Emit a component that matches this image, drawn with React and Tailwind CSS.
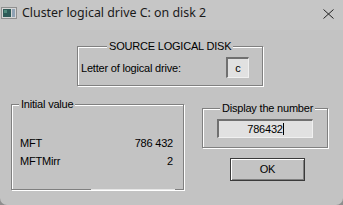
import React from 'react';

const etched = 'border border-[#808080] shadow-[inset_1px_1px_0_#fff,1px_1px_0_#fff]';
const sunken = 'border-t-2 border-l-2 border-t-[#707070] border-l-[#707070] border-b border-r border-b-[#f0f0f0] border-r-[#f0f0f0] bg-[#e1e1e1]';

const GroupBox = ({ title, titleLeft, className = '', children }) => (
  <div className={`relative ${etched} ${className}`}>
    <span
      className="absolute top-[-7px] bg-[#c3c3c3] px-[2px] leading-[12px] whitespace-nowrap"
      style={{ left: titleLeft }}
    >
      {title}
    </span>
    {children}
  </div>
);

const WindowIcon = () => (
  <svg width="16" height="12" viewBox="0 0 16 12">
    <rect x="0.5" y="0.5" width="15" height="11" fill="#d6d6d6" stroke="#8f8f8f" />
    <rect x="2" y="2" width="8" height="8" fill="#2e5b58" />
    <rect x="3" y="3" width="3" height="3" fill="#4f8a7c" />
    <rect x="11" y="2" width="3" height="8" fill="#8fa2b4" />
  </svg>
);

export default function App() {
  return (
    <div className="w-[343px] h-[205px] bg-[#8e8e8e] overflow-hidden">
      <div
        className="w-[343px] h-[205px] bg-[#c3c3c3] rounded-b-[7px] text-black text-[11px] tracking-[-0.2px]"
        style={{ fontFamily: '"Liberation Sans", Arial, sans-serif' }}
      >
        {/* Title bar */}
        <div className="h-[30px] bg-[#c6c6c6] flex items-center">
          <div className="ml-[1px] mt-[-4px]">
            <WindowIcon />
          </div>
          <span
            className="ml-[5px] mt-[-3px] text-[12.4px] tracking-normal text-[#1a1a1a]"
            style={{ fontFamily: '"Noto Sans", "Open Sans", sans-serif' }}
          >
            Cluster logical drive C: on disk 2
          </span>
          <svg className="ml-auto mr-[9px] mt-[-3px]" width="11" height="10" viewBox="0 0 11 10">
            <path d="M0.5 0.5 L10.5 9.5 M10.5 0.5 L0.5 9.5" stroke="#222" strokeWidth="1" fill="none" />
          </svg>
        </div>

        {/* Source logical disk */}
        <GroupBox
          title="SOURCE LOGICAL DISK"
          titleLeft={29}
          className="ml-[77px] mt-[16px] w-[186px] h-[40px] flex items-center justify-between pl-[3px] pr-[13px]"
        >
          <span className="mt-[4px]">Letter of logical drive:</span>
          <div className={`${sunken} w-[23px] h-[21px] mt-[3px] flex items-center justify-center`}>
            c
          </div>
        </GroupBox>

        <div className="flex mt-[18px]">
          {/* Initial value */}
          <GroupBox
            title="Initial value"
            titleLeft={7}
            className="ml-[11px] w-[173px] h-[86px] flex flex-col pt-[29px] pl-[8px] pr-[10px]"
          >
            <div className="flex justify-between h-[18px] items-center">
              <span>MFT</span>
              <span>786 432</span>
            </div>
            <div className="flex justify-between h-[18px] items-center">
              <span>MFTMirr</span>
              <span>2</span>
            </div>
            <div className="absolute left-[79px] bottom-[-1px] w-[84px] h-[1px] bg-[#e6e6e6]" />
          </GroupBox>

          <div className="ml-[18px] mt-[4px] flex flex-col">
            {/* Display the number */}
            <GroupBox
              title="Display the number"
              titleLeft={17}
              className="w-[126px] h-[40px] pt-[10px] pl-[14px]"
            >
              <div className={`${sunken} w-[96px] h-[19px] flex items-center justify-center`}>
                <span>786432</span>
                <span className="inline-block w-[1px] h-[12px] bg-black" />
              </div>
            </GroupBox>

            {/* OK button */}
            <button className="ml-[28px] mt-[10px] w-[75px] h-[23px] border border-[#3a3a3a] bg-[#c3c3c3] shadow-[inset_1px_1px_0_#fff,inset_-1px_-1px_0_#808080] flex items-center justify-center">
              OK
            </button>
          </div>
        </div>
      </div>
    </div>
  );
}
